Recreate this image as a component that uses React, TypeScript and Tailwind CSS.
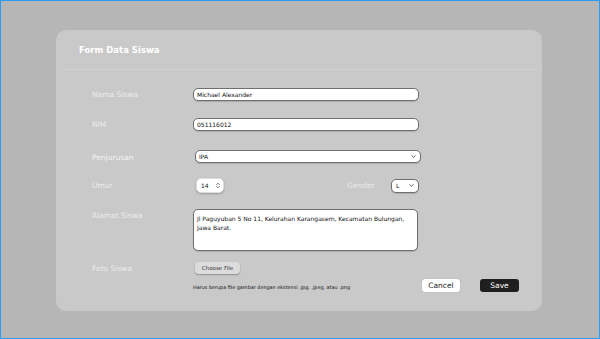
const font = { fontFamily: '"DejaVu Sans", "Noto Sans", sans-serif' };

function Chevron({ className }: { className?: string }) {
  return (
    <svg viewBox="0 0 10 6" className={className} fill="none" stroke="#333" strokeWidth="1.6" strokeLinecap="round" strokeLinejoin="round">
      <path d="M1.5 1.2 5 4.6 8.5 1.2" />
    </svg>
  );
}

function Label({ children, className = "" }: { children: React.ReactNode; className?: string }) {
  return <div className={`w-[101px] shrink-0 text-[7.5px] text-[#ececec] ${className}`}>{children}</div>;
}

const boxCls =
  "bg-white border border-[#6f6f6f] rounded-[5px] shadow-[0_1px_1px_rgba(0,0,0,0.15)] text-[6px] text-[#111] outline-none";

export default function App() {
  return (
    <div className="w-[600px] h-[339px] bg-[#b6b6b6] border border-[#2b9cf2] overflow-hidden" style={font}>
      <div className="ml-[55px] mt-[29px] w-[486px] h-[281px] bg-[#c9c9c9] rounded-[10px] flex flex-col">
        <div className="h-[39px] flex items-center pl-[23px] pt-[1px]">
          <h1 className="text-[8.5px] font-bold text-white">Form Data Siswa</h1>
        </div>
        <div className="ml-[7px] mr-[5px] h-px bg-[#d3d3d3]" />

        <div className="pl-[36px] pr-[23px] flex flex-col">
          <div className="flex items-center mt-[18px]">
            <Label>Nama Siswa</Label>
            <input readOnly value="Michael Alexander" className={`${boxCls} w-[226px] h-[13px] px-[3px]`} />
          </div>

          <div className="flex items-center mt-[17px]">
            <Label>NIM</Label>
            <input readOnly value="051116012" className={`${boxCls} w-[226px] h-[13px] px-[3px]`} />
          </div>

          <div className="flex items-center mt-[18px]">
            <Label className="pt-[3px] text-[#f4f4f4]">Penjurusan</Label>
            <div className={`${boxCls} ml-[2px] w-[226px] h-[13px] px-[3px] flex items-center justify-between`}>
              <span>IPA</span>
              <Chevron className="w-[5px] h-[3px] mr-[1px]" />
            </div>
          </div>

          <div className="flex items-center mt-[15px]">
            <Label>Umur</Label>
            <div className={`${boxCls} ml-[3px] w-[28px] h-[15px] pl-[4px] pr-[3px] flex items-center justify-between border-[#ddd] shadow-[0_1px_2px_rgba(0,0,0,0.25)]`}>
              <span>14</span>
              <svg viewBox="0 0 6 10" className="w-[4px] h-[7px]" fill="none" stroke="#444" strokeWidth="1.2" strokeLinecap="round" strokeLinejoin="round">
                <path d="M1 3.6 3 1.6 5 3.6" />
                <path d="M1 6.4 3 8.4 5 6.4" />
              </svg>
            </div>
            <div className="ml-[123px] w-[44px] text-[7.5px] text-[#ececec] pb-[1px]">Gender</div>
            <div className={`${boxCls} w-[28px] h-[14px] px-[4px] flex items-center justify-between`}>
              <span>L</span>
              <Chevron className="w-[5px] h-[3px]" />
            </div>
          </div>

          <div className="flex items-start mt-[16px]">
            <Label className="pt-[1px]">Alamat Siswa</Label>
            <div className={`${boxCls} w-[225px] h-[42px] px-[3px] pt-[4px] leading-[9px]`}>
              Jl Paguyuban 5 No 11, Kelurahan Karangasem, Kecamatan Bulungan, Jawa Barat.
            </div>
          </div>

          <div className="flex items-center mt-[11px]">
            <Label>Foto Siswa</Label>
            <button className="ml-[2px] w-[45px] h-[12px] rounded-[4px] bg-[#dcdcdc] shadow-[0_1px_1.5px_rgba(0,0,0,0.3)] text-[5.5px] text-[#333]">
              Choose File
            </button>
          </div>

          <div className="flex items-center mt-[5px]">
            <div className="w-[101px] shrink-0" />
            <div className="flex-1 text-[4.9px] text-[#111] pt-[4px]">
              Harus berupa file gambar dengan ekstensi .jpg, .jpeg, atau .png
            </div>
            <button className="w-[38px] h-[13px] rounded-[3px] bg-white text-[7.5px] text-[#222] shadow-[0_0_1px_rgba(0,0,0,0.3)]">
              Cancel
            </button>
            <button className="ml-[20px] w-[39px] h-[13px] rounded-[3px] bg-[#1f1f1f] text-[7.5px] text-white font-medium">
              Save
            </button>
          </div>
        </div>
      </div>
    </div>
  );
}
